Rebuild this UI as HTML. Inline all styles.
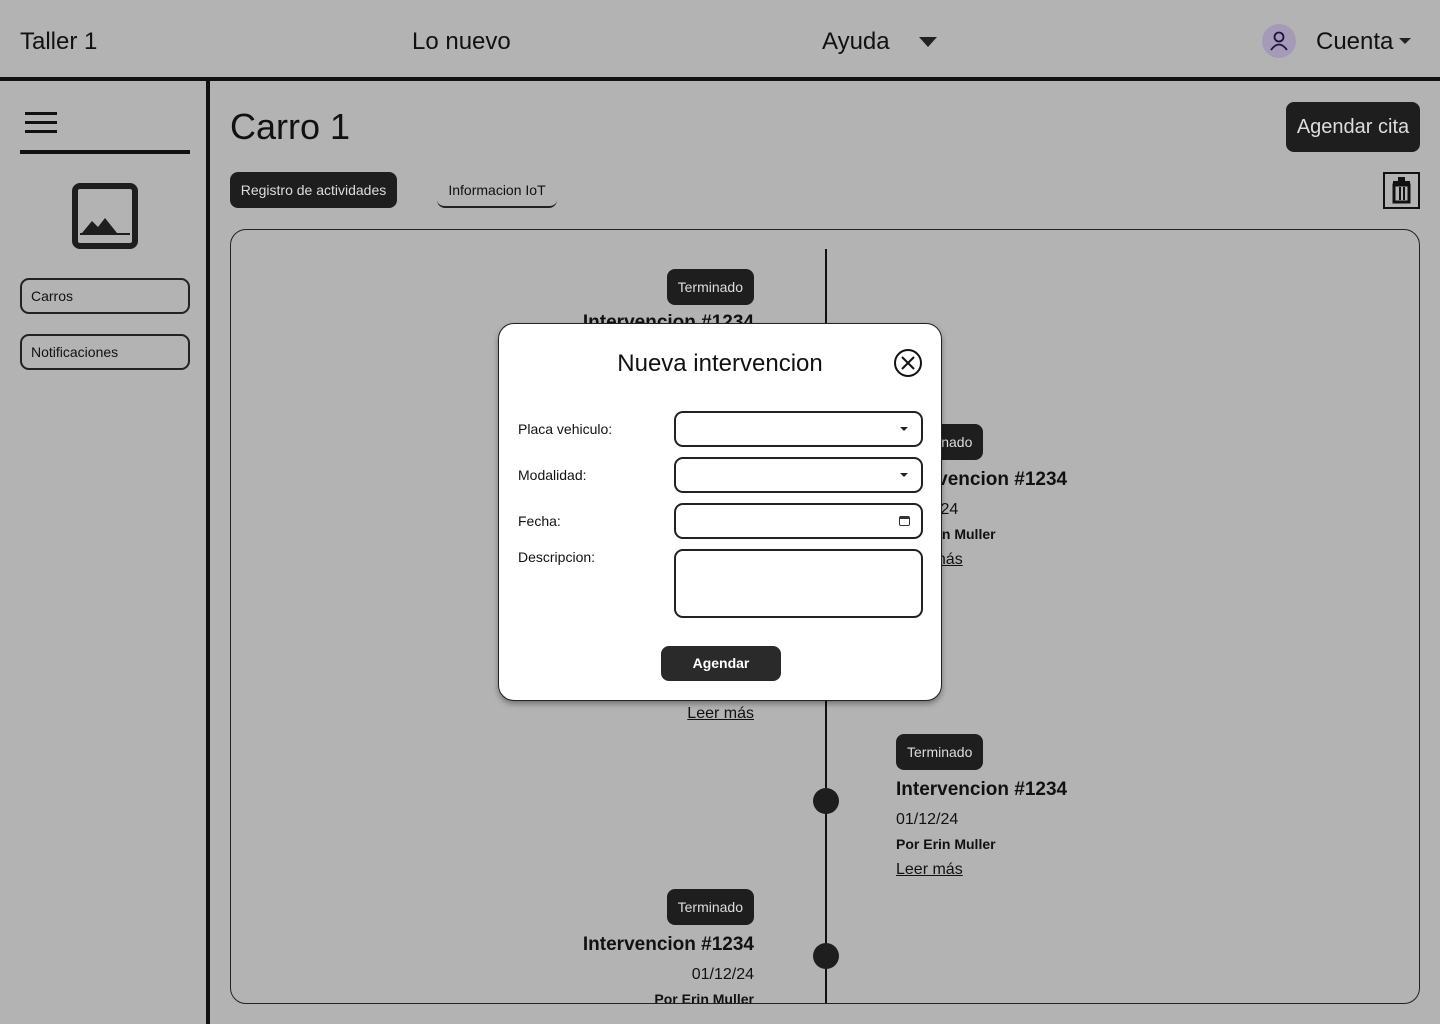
<!DOCTYPE html>
<html><head><meta charset="utf-8"><style>
*{box-sizing:border-box;margin:0;padding:0}
body{width:1440px;height:1024px;background:#b3b3b3;font-family:"Liberation Sans",sans-serif;color:#111;position:relative;overflow:hidden}
.a{position:absolute}
.nav{font-size:24px;top:28px}
.badge{position:absolute;background:#1e1e1e;color:#ddd;font-size:14px;height:36px;line-height:36px;padding:0 11px;border-radius:8px}
.t{position:absolute;font-size:19px;font-weight:bold;white-space:nowrap}
.d{position:absolute;font-size:16px}
.au{position:absolute;font-size:14px;font-weight:bold}
.lm{position:absolute;font-size:16px;text-decoration:underline}
.r{text-align:right;right:0}
.dot{position:absolute;width:26px;height:26px;border-radius:50%;background:#1e1e1e;left:582px}
.inp{position:absolute;left:175px;width:249px;height:36px;border:2px solid #222;border-radius:9px;background:#fff}
.lb{position:absolute;left:19px;font-size:14px}
</style></head><body>
<div class="a nav" style="left:20px">Taller 1</div>
<div class="a nav" style="left:412px">Lo nuevo</div>
<div class="a nav" style="left:822px">Ayuda</div>
<div class="a" style="left:919px;top:37px;width:0;height:0;border-left:9px solid transparent;border-right:9px solid transparent;border-top:10px solid #222"></div>
<div class="a" style="left:1262px;top:24px;width:34px;height:34px;border-radius:50%;background:#a59ab8">
<svg width="34" height="34" viewBox="0 0 34 34"><circle cx="17" cy="13" r="4.5" fill="none" stroke="#1d1440" stroke-width="1.8"/><path d="M9 26 Q17 15 25 26" fill="none" stroke="#1d1440" stroke-width="1.8"/></svg></div>
<div class="a nav" style="left:1316px">Cuenta</div>
<div class="a" style="left:1399px;top:38px;width:0;height:0;border-left:6px solid transparent;border-right:6px solid transparent;border-top:6px solid #222"></div>
<div class="a" style="left:0;top:77px;width:1440px;height:4px;background:#111"></div>
<div class="a" style="left:206px;top:81px;width:4px;height:943px;background:#111"></div>
<div class="a" style="left:25px;top:112px;width:32px;height:3px;background:#111;box-shadow:0 9px 0 #111,0 18px 0 #111"></div>
<div class="a" style="left:20px;top:150px;width:170px;height:4px;background:#111"></div>
<svg class="a" style="left:72px;top:183px" width="66" height="66" viewBox="0 0 66 66"><rect x="3" y="3" width="60" height="60" rx="5" fill="none" stroke="#1e1e1e" stroke-width="6"/><path d="M10 50 L20 38 L26 44 L33 35 L45 50 Z" fill="#1e1e1e"/><rect x="8" y="50" width="50" height="2" fill="#1e1e1e"/></svg>
<div class="a" style="left:20px;top:278px;width:170px;height:36px;border:2px solid #222;border-radius:9px;font-size:14px;line-height:32px;padding-left:9px">Carros</div>
<div class="a" style="left:20px;top:334px;width:170px;height:36px;border:2px solid #222;border-radius:9px;font-size:14px;line-height:32px;padding-left:9px">Notificaciones</div>
<div class="a" style="left:230px;top:106px;font-size:36px">Carro 1</div>
<div class="a" style="left:1286px;top:102px;width:134px;height:50px;background:#1e1e1e;color:#ddd;border-radius:8px;font-size:20px;line-height:50px;text-align:center">Agendar cita</div>
<div class="a" style="left:230px;top:172px;width:167px;height:36px;background:#1e1e1e;color:#ddd;border-radius:8px;font-size:14px;line-height:36px;text-align:center">Registro de actividades</div>
<div class="a" style="left:437px;top:172px;width:120px;height:36px;border-bottom:2px solid #222;border-radius:0 0 8px 8px;font-size:14px;line-height:36px;text-align:center">Informacion IoT</div>
<div class="a" style="left:1383px;top:172px;width:37px;height:37px;border:2px solid #111">
<svg width="33" height="33" viewBox="0 0 33 33"><rect x="8" y="7" width="17" height="3" fill="#111"/><rect x="13" y="3" width="7" height="4" fill="#111"/><path d="M9 11 h15 v17 h-15 z" fill="none" stroke="#111" stroke-width="3"/><rect x="14" y="13" width="2" height="13" fill="#111"/><rect x="18" y="13" width="2" height="13" fill="#111"/></svg></div>
<div class="a" style="left:230px;top:229px;width:1190px;height:775px;border:1px solid #222;border-radius:16px;overflow:hidden">
 <div class="a" style="left:594px;top:19px;width:2px;height:760px;background:#111"></div>
 <div class="dot" style="top:558px"></div>
 <div class="dot" style="top:713px"></div>
 <div class="a" style="left:0;top:0;width:523px;height:800px">
  <div class="badge" style="right:0;top:39px">Terminado</div>
  <div class="t r" style="top:82px">Intervencion #1234</div>
  <div class="lm r" style="top:475px">Leer más</div>
  <div class="badge" style="right:0;top:659px">Terminado</div>
  <div class="t r" style="top:704px">Intervencion #1234</div>
  <div class="d r" style="top:736px">01/12/24</div>
  <div class="au r" style="top:761px">Por Erin Muller</div>
 </div>
 <div class="a" style="left:665px;top:0;width:400px;height:800px">
  <div class="badge" style="left:0;top:194px">Terminado</div>
  <div class="t" style="left:0;top:239px">Intervencion #1234</div>
  <div class="d" style="left:0;top:271px">01/12/24</div>
  <div class="au" style="left:0;top:296px">Por Erin Muller</div>
  <div class="lm" style="left:0;top:321px">Leer más</div>
  <div class="badge" style="left:0;top:504px">Terminado</div>
  <div class="t" style="left:0;top:549px">Intervencion #1234</div>
  <div class="d" style="left:0;top:581px">01/12/24</div>
  <div class="au" style="left:0;top:606px">Por Erin Muller</div>
  <div class="lm" style="left:0;top:631px">Leer más</div>
 </div>
</div>
<div class="a" style="left:498px;top:323px;width:444px;height:378px;background:#fff;border:1px solid #222;border-radius:16px;box-shadow:0 3px 6px rgba(0,0,0,.35)">
 <div class="a" style="left:0;width:442px;top:26px;text-align:center;font-size:24px">Nueva intervencion</div>
 <svg class="a" style="left:394px;top:24px" width="30" height="30" viewBox="0 0 30 30"><circle cx="15" cy="15" r="13" fill="none" stroke="#111" stroke-width="2"/><path d="M9 9 L21 21 M21 9 L9 21" stroke="#111" stroke-width="2"/></svg>
 <div class="lb" style="top:97px">Placa vehiculo:</div>
 <div class="inp" style="top:87px"><div class="a" style="right:13px;top:14px;border-left:4px solid transparent;border-right:4px solid transparent;border-top:4px solid #222"></div></div>
 <div class="lb" style="top:143px">Modalidad:</div>
 <div class="inp" style="top:133px"><div class="a" style="right:13px;top:14px;border-left:4px solid transparent;border-right:4px solid transparent;border-top:4px solid #222"></div></div>
 <div class="lb" style="top:189px">Fecha:</div>
 <div class="inp" style="top:179px"><div class="a" style="right:11px;top:11px;width:11px;height:10px;border:1.5px solid #333;border-top-width:3px;border-radius:2px"></div></div>
 <div class="lb" style="top:225px">Descripcion:</div>
 <div class="inp" style="top:225px;height:69px"></div>
 <div class="a" style="left:162px;top:322px;width:120px;height:35px;background:#2a2a2a;color:#fff;border-radius:8px;font-size:14px;font-weight:bold;line-height:35px;text-align:center">Agendar</div>
</div>
</body></html>
